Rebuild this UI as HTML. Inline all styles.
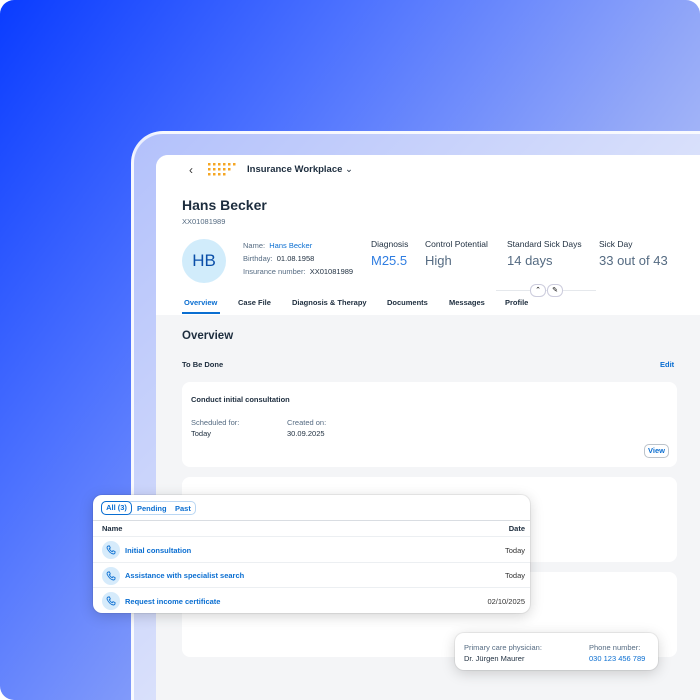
<!DOCTYPE html>
<html><head><style>
*{margin:0;padding:0;box-sizing:border-box}
html,body{width:700px;height:700px;overflow:hidden;background:#fff;font-family:"Liberation Sans",sans-serif;}
#w{position:relative;width:700px;height:700px;overflow:hidden}
.bg{position:absolute;left:0;top:0;width:700px;height:700px;border-radius:14px;overflow:hidden;background:linear-gradient(125deg,#0a3cff 0%,#4d72ff 30%,#93a8f8 60%,#c9d3f8 85%,#dfe4f8 100%);}
.frame{position:absolute;left:131px;top:131px;width:569px;height:569px;border-radius:32px 0 0 0;background:linear-gradient(135deg,#b3c1fb,#dfe5fb 60%,#e8ecfb);border:3px solid rgba(255,255,255,.75);border-right:none;border-bottom:none}
.screen{position:absolute;left:156px;top:155px;width:544px;height:545px;border-radius:12px 0 0 0;background:#f4f5f7;overflow:hidden;}
.a{position:absolute;white-space:nowrap}
.head{position:absolute;left:0;top:0;width:544px;height:160px;background:#fff}
.card{position:absolute;left:26px;width:495px;height:85px;background:#fff;border-radius:8px}
.pop{position:absolute;background:#fff;border-radius:9px;box-shadow:0 3px 14px rgba(0,0,0,.18),0 0 0 1px rgba(0,0,0,.06)}
.lnk{color:#0a6ed1}
.ic{position:absolute;left:9px;width:18px;height:18px;border-radius:50%;background:#d6ebfb}
</style></head><body><div id="w">
<div class="bg"></div>
<div class="frame"></div>
<div class="screen">
 <div class="head">
  <div class="a" style="left:33px;top:8px;font-size:12px;color:#333">‹</div>
  <svg class="a" style="left:52px;top:8px" width="30" height="14">
   <g fill="#f5a623"><rect x="0" y="0" width="2.5" height="2.5"/><rect x="5" y="0" width="2.5" height="2.5"/><rect x="10" y="0" width="2.5" height="2.5"/><rect x="15" y="0" width="2.5" height="2.5"/><rect x="20" y="0" width="2.5" height="2.5"/><rect x="25" y="0" width="2.5" height="2.5"/>
   <rect x="0" y="5" width="2.5" height="2.5"/><rect x="5" y="5" width="2.5" height="2.5"/><rect x="10" y="5" width="2.5" height="2.5"/><rect x="15" y="5" width="2.5" height="2.5"/><rect x="20" y="5" width="2.5" height="2.5"/>
   <rect x="0" y="10" width="2.5" height="2.5"/><rect x="5" y="10" width="2.5" height="2.5"/><rect x="10" y="10" width="2.5" height="2.5"/><rect x="15" y="10" width="2.5" height="2.5"/></g></svg>
  <div class="a" style="left:91px;top:9px;font-size:9.5px;font-weight:bold;color:#1d2d3e">Insurance Workplace <span style="font-weight:normal">⌄</span></div>
  <div class="a" style="left:26px;top:42px;font-size:14px;font-weight:bold;color:#1d2d3e">Hans Becker</div>
  <div class="a" style="left:26px;top:62px;font-size:7.5px;color:#556b82">XX01081989</div>
  <div class="a" style="left:26px;top:84px;width:44px;height:44px;border-radius:50%;background:#d1ecfb;color:#0a4ea8;font-size:17px;text-align:center;line-height:44px">HB</div>
  <div class="a" style="left:87px;top:84px;font-size:7.5px;color:#556b82;line-height:13px">Name: &nbsp;<span class="lnk">Hans Becker</span><br>Birthday: &nbsp;<span style="color:#1d2d3e">01.08.1958</span><br>Insurance number: &nbsp;<span style="color:#1d2d3e">XX01081989</span></div>
  <div class="a" style="left:215px;top:84px;font-size:8.5px;color:#1d2d3e">Diagnosis</div>
  <div class="a" style="left:215px;top:98px;font-size:13px;color:#2f7de1">M25.5</div>
  <div class="a" style="left:269px;top:84px;font-size:8.5px;color:#1d2d3e">Control Potential</div>
  <div class="a" style="left:269px;top:98px;font-size:13px;color:#556b82">High</div>
  <div class="a" style="left:351px;top:84px;font-size:8.5px;color:#1d2d3e">Standard Sick Days</div>
  <div class="a" style="left:351px;top:98px;font-size:13px;color:#556b82">14 days</div>
  <div class="a" style="left:443px;top:84px;font-size:8.5px;color:#1d2d3e">Sick Day</div>
  <div class="a" style="left:443px;top:98px;font-size:13px;color:#556b82">33 out of 43</div>
  <div class="a" style="left:340px;top:135px;width:100px;height:1px;background:#e5e8ec"></div>
  <div class="a" style="left:374px;top:129px;width:16px;height:13px;border:1px solid #ccd;border-radius:6px;background:#fff;font-size:7px;text-align:center;line-height:11px">⌃</div>
  <div class="a" style="left:391px;top:129px;width:16px;height:13px;border:1px solid #ccd;border-radius:6px;background:#fff;font-size:7px;text-align:center;line-height:11px">✎</div>
  <div class="a" style="left:28px;top:143px;font-size:7.5px;font-weight:bold;color:#0a6ed1">Overview</div>
  <div class="a" style="left:26px;top:157px;width:38px;height:2px;background:#0a6ed1"></div>
  <div class="a" style="left:82px;top:143px;font-size:7.5px;font-weight:bold;color:#1d2d3e">Case File</div>
  <div class="a" style="left:136px;top:143px;font-size:7.5px;font-weight:bold;color:#1d2d3e">Diagnosis &amp; Therapy</div>
  <div class="a" style="left:231px;top:143px;font-size:7.5px;font-weight:bold;color:#1d2d3e">Documents</div>
  <div class="a" style="left:293px;top:143px;font-size:7.5px;font-weight:bold;color:#1d2d3e">Messages</div>
  <div class="a" style="left:349px;top:143px;font-size:7.5px;font-weight:bold;color:#1d2d3e">Profile</div>
 </div>
 <div class="a" style="left:26px;top:175px;font-size:11.5px;font-weight:bold;color:#1d2d3e">Overview</div>
 <div class="a" style="left:26px;top:205px;font-size:7.5px;font-weight:bold;color:#1d2d3e">To Be Done</div>
 <div class="a lnk" style="left:504px;top:205px;font-size:7.5px;font-weight:bold">Edit</div>
 <div class="card" style="top:227px">
  <div class="a" style="left:9px;top:13px;font-size:7.5px;font-weight:bold;color:#1d2d3e">Conduct initial consultation</div>
  <div class="a" style="left:9px;top:35px;font-size:7.5px;color:#556b82;line-height:11px">Scheduled for:<br><span style="color:#1d2d3e">Today</span></div>
  <div class="a" style="left:105px;top:35px;font-size:7.5px;color:#556b82;line-height:11px">Created on:<br><span style="color:#1d2d3e">30.09.2025</span></div>
  <div class="a lnk" style="left:462px;top:62px;width:25px;height:14px;border:1px solid #bcc3ca;border-radius:5px;font-size:7.5px;font-weight:bold;text-align:center;line-height:12px">View</div>
 </div>
 <div class="card" style="top:322px"></div>
 <div class="card" style="top:417px"></div>
</div>
<div class="pop" style="left:93px;top:495px;width:437px;height:118px;overflow:hidden">
 <div class="a" style="left:8px;top:6px;width:95px;height:14px;border:1px solid #b9d6f3;border-radius:5px"></div>
 <div class="a lnk" style="left:8px;top:6px;width:31px;height:14px;border:1px solid #0a6ed1;border-radius:5px;font-size:7.5px;font-weight:bold;text-align:center;line-height:12px">All (3)</div>
 <div class="a lnk" style="left:44px;top:9px;font-size:7.5px;font-weight:bold">Pending</div>
 <div class="a lnk" style="left:82px;top:9px;font-size:7.5px;font-weight:bold">Past</div>
 <div class="a" style="left:0;top:25px;width:437px;height:1px;background:#d9dde2"></div>
 <div class="a" style="left:9px;top:29px;font-size:7.5px;font-weight:bold;color:#1d2d3e">Name</div>
 <div class="a" style="right:5px;top:29px;font-size:7.5px;font-weight:bold;color:#1d2d3e">Date</div>
 <div class="a" style="left:0;top:41px;width:437px;height:1px;background:#eceff2"></div>
 <div class="ic" style="top:46px"></div><div class="a lnk" style="left:32px;top:51px;font-size:7.5px;font-weight:bold">Initial consultation</div><div class="a" style="right:5px;top:51px;font-size:7.5px;color:#333">Today</div>
 <div class="a" style="left:0;top:67px;width:437px;height:1px;background:#eceff2"></div>
 <div class="ic" style="top:72px"></div><div class="a lnk" style="left:32px;top:76px;font-size:7.5px;font-weight:bold">Assistance with specialist search</div><div class="a" style="right:5px;top:76px;font-size:7.5px;color:#333">Today</div>
 <div class="a" style="left:0;top:92px;width:437px;height:1px;background:#eceff2"></div>
 <div class="ic" style="top:97px"></div><div class="a lnk" style="left:32px;top:102px;font-size:7.5px;font-weight:bold">Request income certificate</div><div class="a" style="right:5px;top:102px;font-size:7.5px;color:#333">02/10/2025</div>
 <svg class="a" style="left:13px;top:50px" width="10" height="10" viewBox="0 0 10 10"><path d="M2 1 L3.5 1 L4.3 3 L3.3 3.8 Q4.5 6 6.2 6.7 L7 5.7 L9 6.5 L9 8 Q8.5 9 7.5 9 Q3.5 8.5 1 3 Q1 1.5 2 1Z" fill="none" stroke="#0a6ed1" stroke-width=".9"/></svg>
 <svg class="a" style="left:13px;top:76px" width="10" height="10" viewBox="0 0 10 10"><path d="M2 1 L3.5 1 L4.3 3 L3.3 3.8 Q4.5 6 6.2 6.7 L7 5.7 L9 6.5 L9 8 Q8.5 9 7.5 9 Q3.5 8.5 1 3 Q1 1.5 2 1Z" fill="none" stroke="#0a6ed1" stroke-width=".9"/></svg>
 <svg class="a" style="left:13px;top:101px" width="10" height="10" viewBox="0 0 10 10"><path d="M2 1 L3.5 1 L4.3 3 L3.3 3.8 Q4.5 6 6.2 6.7 L7 5.7 L9 6.5 L9 8 Q8.5 9 7.5 9 Q3.5 8.5 1 3 Q1 1.5 2 1Z" fill="none" stroke="#0a6ed1" stroke-width=".9"/></svg>
</div>
<div class="pop" style="left:455px;top:633px;width:203px;height:37px">
 <div class="a" style="left:9px;top:9px;font-size:7.5px;color:#556b82;line-height:11px">Primary care physician:<br><span style="color:#1d2d3e">Dr. Jürgen Maurer</span></div>
 <div class="a" style="left:134px;top:9px;font-size:7.5px;color:#556b82;line-height:11px">Phone number:<br><span class="lnk">030 123 456 789</span></div>
</div>
</div></body></html>
